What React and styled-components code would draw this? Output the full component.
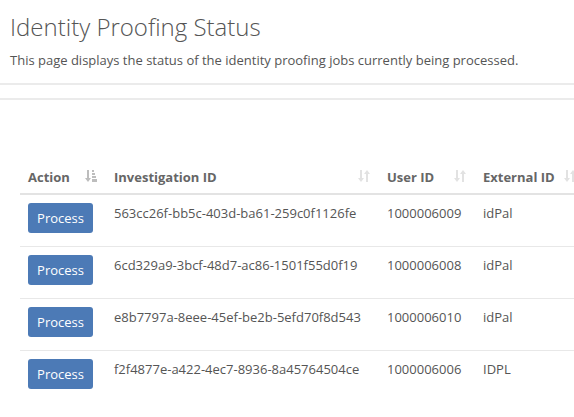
import React from "react";
import styled, { createGlobalStyle } from "styled-components";

const GlobalStyle = createGlobalStyle`
  html, body {
    margin: 0;
    padding: 0;
    background: #fff;
    overflow: hidden;
  }
  body {
    font-family: "Open Sans", "Liberation Sans", sans-serif;
    color: #555;
  }
`;

const Page = styled.div`
  width: 574px;
  height: 417px;
  overflow: hidden;
  background: #fff;
`;

const Header = styled.header`
  padding: 11px 10px 0;
`;

const Title = styled.h1`
  margin: 0;
  font-weight: 300;
  font-size: 24px;
  line-height: 32px;
  color: #555;
`;

const Lead = styled.p`
  margin: 7px 0 0;
  font-size: 13px;
  line-height: 20px;
  color: #555;
`;

const Rule = styled.hr`
  border: 0;
  border-top: 2px solid #ebebeb;
  margin: ${(p) => p.$top}px 0 0;
  height: 0;
`;

const TableWrap = styled.div`
  padding: 57px 0 0 20px;
`;

const Table = styled.table`
  border-collapse: collapse;
  width: 565px;
  table-layout: fixed;
  font-size: 13px;
`;

const Th = styled.th`
  position: relative;
  width: ${(p) => p.$w - 16}px;
  text-align: left;
  font-weight: 700;
  color: #666;
  padding: 10px 8px 6px;
  line-height: 20px;
  border-bottom: 2px solid #e3e3e3;
  white-space: nowrap;
`;

const SortIcon = styled.span`
  position: absolute;
  right: 9px;
  top: 12px;
  display: flex;
  color: ${(p) => (p.$active ? "#bdbdbd" : "#e2e2e2")};
`;

const Tr = styled.tr`
  border-bottom: 1px solid #e8e8e8;
  &:last-child {
    border-bottom: 0;
  }
`;

const Td = styled.td`
  padding: 8px 8px 13px;
  vertical-align: top;
  line-height: 20px;
  color: #555;
  white-space: nowrap;
`;

const Button = styled.button`
  display: block;
  width: 65px;
  height: 30px;
  padding: 0;
  border: 0;
  border-radius: 3px;
  background: #4c7ab6;
  color: #fff;
  font-family: "Open Sans", "Liberation Sans", sans-serif;
  font-size: 13px;
  cursor: pointer;
`;

/* two-arrow sort glyph for unsorted columns */
const SortBoth = () => (
  <svg width="12" height="14" viewBox="0 0 12 14" fill="currentColor">
    <rect x="2" y="1" width="2" height="9" />
    <polygon points="0,9 6,9 3,13" />
    <rect x="8" y="4" width="2" height="9" />
    <polygon points="6,5 12,5 9,1" />
  </svg>
);

/* ascending sort glyph: arrow plus stacked bars */
const SortAsc = () => (
  <svg width="12" height="14" viewBox="0 0 12 14" fill="currentColor">
    <rect x="2" y="1" width="2" height="9" />
    <polygon points="0,9 6,9 3,13" />
    <rect x="7" y="1" width="2" height="2" />
    <rect x="7" y="4" width="3" height="2" />
    <rect x="7" y="7" width="4" height="2" />
    <rect x="7" y="10" width="5" height="3" />
  </svg>
);

const columns = [
  { label: "Action", w: 86, active: true },
  { label: "Investigation ID", w: 273 },
  { label: "User ID", w: 96 },
  { label: "External ID", w: 110 },
];

const rows = [
  { id: "563cc26f-bb5c-403d-ba61-259c0f1126fe", user: "1000006009", ext: "idPal" },
  { id: "6cd329a9-3bcf-48d7-ac86-1501f55d0f19", user: "1000006008", ext: "idPal" },
  { id: "e8b7797a-8eee-45ef-be2b-5efd70f8d543", user: "1000006010", ext: "idPal" },
  { id: "f2f4877e-a422-4ec7-8936-8a45764504ce", user: "1000006006", ext: "IDPL" },
];

export default function App() {
  return (
    <Page>
      <GlobalStyle />
      <Header>
        <Title>Identity Proofing Status</Title>
        <Lead>This page displays the status of the identity proofing jobs currently being processed.</Lead>
      </Header>
      <Rule $top={13} />
      <Rule $top={13} />
      <TableWrap>
        <Table>
          <thead>
            <tr>
              {columns.map((c) => (
                <Th key={c.label} $w={c.w}>
                  {c.label}
                  <SortIcon $active={c.active}>{c.active ? <SortAsc /> : <SortBoth />}</SortIcon>
                </Th>
              ))}
            </tr>
          </thead>
          <tbody>
            {rows.map((r) => (
              <Tr key={r.id}>
                <Td>
                  <Button>Process</Button>
                </Td>
                <Td>{r.id}</Td>
                <Td>{r.user}</Td>
                <Td>{r.ext}</Td>
              </Tr>
            ))}
          </tbody>
        </Table>
      </TableWrap>
    </Page>
  );
}
